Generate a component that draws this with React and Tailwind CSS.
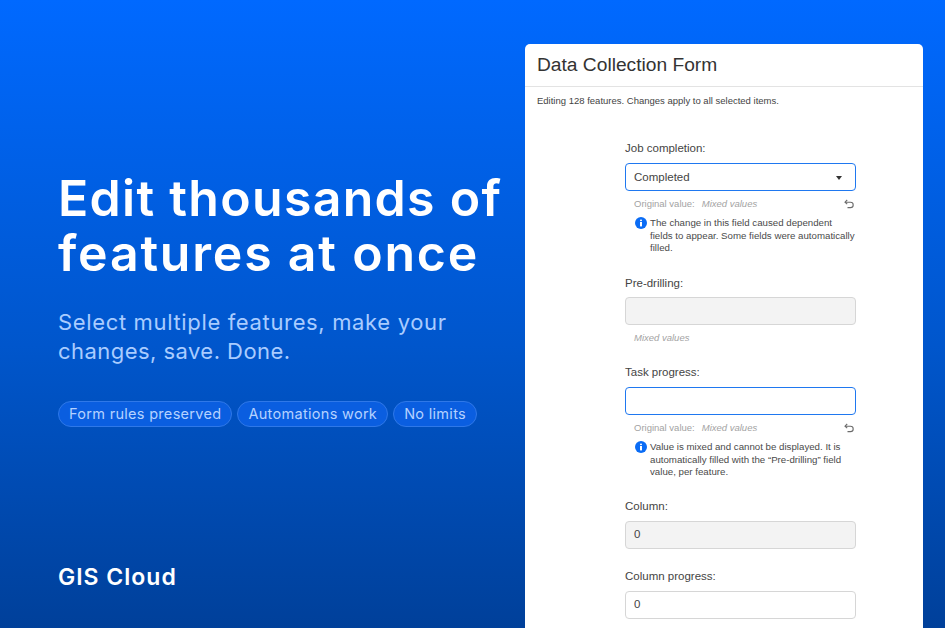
const formFont = "font-['Liberation_Sans',Arial,sans-serif]";

const InfoIcon = () => (
  <svg width="12" height="12" viewBox="0 0 12 12" className="shrink-0">
    <circle cx="6" cy="6" r="6" fill="#0a6cf5" />
    <rect x="5" y="5" width="2" height="4.4" fill="#fff" />
    <rect x="5" y="2.4" width="2" height="1.8" rx="0.9" fill="#fff" />
  </svg>
);

const UndoIcon = () => (
  <svg width="10" height="10" viewBox="0 0 10 10" fill="none" stroke="#6b6b6b" strokeWidth="1.1">
    <path d="M3.2 1 L1 3.2 L3.2 5.2" />
    <path d="M1 3.2 H6.5 A2.6 2.6 0 0 1 6.5 8.6 H3.5" />
  </svg>
);

const Original = () => (
  <div className="flex items-center justify-between pl-[9px] pr-[2px] mt-[7px] text-[9.5px] leading-[12px] text-[#a3a3a3]">
    <span>
      Original value:<span className="italic ml-[7px]">Mixed values</span>
    </span>
    <UndoIcon />
  </div>
);

const Note = ({ children }) => (
  <div className="flex gap-[3px] pl-[10px] mt-[7px] text-[9.7px] leading-[12.5px] text-[#4a4a4a]">
    <InfoIcon />
    <p className="whitespace-nowrap">{children}</p>
  </div>
);

const Label = ({ children }) => (
  <p className="text-[11.5px] leading-[14px] text-[#444]">{children}</p>
);

const Field = ({ focus, disabled, children }) => (
  <div
    className={`h-[28px] mt-[8px] pt-[1px] rounded-[4px] border flex items-center justify-between px-[8px] text-[11.5px] text-[#444] ${
      focus ? "border-[#1f78f0]" : "border-[#d6d6d6]"
    } ${disabled ? "bg-[#f3f3f3]" : "bg-white"}`}
  >
    {children}
  </div>
);

const Pill = ({ children }) => (
  <span className="h-[26px] px-[10px] flex items-center rounded-full bg-[#0a5ee0] border border-[#2f78e8] text-[14.5px] tracking-[0.3px] text-[#b5d2ff] whitespace-nowrap">
    {children}
  </span>
);

const App = () => {
  return (
    <div className="h-[628px] w-[945px] overflow-hidden flex bg-gradient-to-b from-[#0069ff] via-[#0056cc] via-55% to-[#00409a] font-['Inter',sans-serif]">
      <div className="w-[525px] shrink-0 pl-[58px] pt-[171px] flex flex-col">
        <h1 className="text-[50px] leading-[55px] font-semibold text-white whitespace-nowrap">
          <span className="tracking-[1.3px]">Edit thousands of</span>
          <br />
          <span className="tracking-[1.8px]">features at once</span>
        </h1>
        <p className="mt-[27px] text-[22px] leading-[29px] text-[#a9ccff] whitespace-nowrap">
          <span className="tracking-[0.65px]">Select multiple features, make your</span>
          <br />
          <span className="tracking-[0.45px]">changes, save. Done.</span>
        </p>
        <div className="flex gap-[5px] mt-[35px]">
          <Pill>Form rules preserved</Pill>
          <Pill>Automations work</Pill>
          <Pill>No limits</Pill>
        </div>
        <p className="mt-[133px] text-[23px] font-semibold tracking-[1px] text-white">GIS Cloud</p>
      </div>

      <div className={`w-[398px] h-[600px] mt-[44px] bg-white rounded-t-[5px] shrink-0 ${formFont}`}>
        <div className="h-[43px] px-[12px] pt-[1px] flex items-center border-b border-[#e3e3e3]">
          <h2 className="text-[19.2px] text-[#333]">Data Collection Form</h2>
        </div>
        <p className="px-[12px] mt-[8px] text-[9.5px] leading-[12px] text-[#444]">
          Editing 128 features. Changes apply to all selected items.
        </p>

        <div className="w-[231px] ml-[100px] mt-[34px]">
          <Label>Job completion:</Label>
          <Field focus>
            Completed
            <span className="w-0 h-0 mr-[5px] border-x-[3.5px] border-x-transparent border-t-[4px] border-t-[#333]" />
          </Field>
          <Original />
          <Note>
            The change in this field caused dependent
            <br />
            fields to appear. Some fields were automatically
            <br />
            filled.
          </Note>

          <div className="mt-[21.5px]">
            <Label>Pre-drilling:</Label>
            <div className="mt-[-1px]">
              <Field disabled />
            </div>
            <p className="pl-[9px] mt-[7px] text-[9.5px] leading-[12px] italic text-[#a3a3a3]">Mixed values</p>
          </div>

          <div className="mt-[21px]">
            <Label>Task progress:</Label>
            <Field focus />
            <Original />
            <Note>
              Value is mixed and cannot be displayed. It is
              <br />
              automatically filled with the “Pre-drilling” field
              <br />
              value, per feature.
            </Note>
          </div>

          <div className="mt-[20px]">
            <Label>Column:</Label>
            <Field disabled>0</Field>
          </div>

          <div className="mt-[20px]">
            <Label>Column progress:</Label>
            <Field>0</Field>
          </div>
        </div>
      </div>
    </div>
  );
};

export default App;
